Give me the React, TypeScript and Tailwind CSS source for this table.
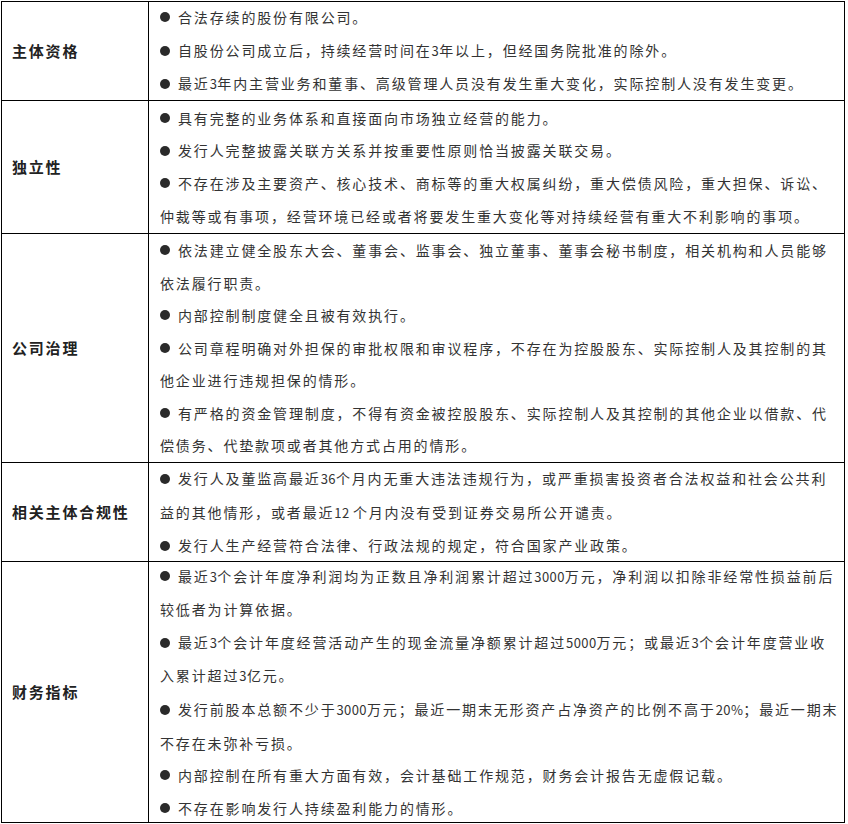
const rows = [
  {
    label: "主体资格",
    h: "h-[99px]",
    items: [
      ["合法存续的股份有限公司。"],
      ["自股份公司成立后，持续经营时间在3年以上，但经国务院批准的除外。"],
      ["最近3年内主营业务和董事、高级管理人员没有发生重大变化，实际控制人没有发生变更。"],
    ],
  },
  {
    label: "独立性",
    h: "h-[133px]",
    items: [
      ["具有完整的业务体系和直接面向市场独立经营的能力。"],
      ["发行人完整披露关联方关系并按重要性原则恰当披露关联交易。"],
      [
        "不存在涉及主要资产、核心技术、商标等的重大权属纠纷，重大偿债风险，重大担保、诉讼、",
        "仲裁等或有事项，经营环境已经或者将要发生重大变化等对持续经营有重大不利影响的事项。",
      ],
    ],
  },
  {
    label: "公司治理",
    h: "h-[229px]",
    items: [
      [
        "依法建立健全股东大会、董事会、监事会、独立董事、董事会秘书制度，相关机构和人员能够",
        "依法履行职责。",
      ],
      ["内部控制制度健全且被有效执行。"],
      [
        "公司章程明确对外担保的审批权限和审议程序，不存在为控股股东、实际控制人及其控制的其",
        "他企业进行违规担保的情形。",
      ],
      [
        "有严格的资金管理制度，不得有资金被控股股东、实际控制人及其控制的其他企业以借款、代",
        "偿债务、代垫款项或者其他方式占用的情形。",
      ],
    ],
  },
  {
    label: "相关主体合规性",
    h: "h-[99px]",
    items: [
      [
        "发行人及董监高最近36个月内无重大违法违规行为，或严重损害投资者合法权益和社会公共利",
        "益的其他情形，或者最近12 个月内没有受到证券交易所公开谴责。",
      ],
      ["发行人生产经营符合法律、行政法规的规定，符合国家产业政策。"],
    ],
  },
  {
    label: "财务指标",
    h: "h-[261px]",
    items: [
      [
        "最近3个会计年度净利润均为正数且净利润累计超过3000万元，净利润以扣除非经常性损益前后",
        "较低者为计算依据。",
      ],
      [
        "最近3个会计年度经营活动产生的现金流量净额累计超过5000万元；或最近3个会计年度营业收",
        "入累计超过3亿元。",
      ],
      [
        "发行前股本总额不少于3000万元；最近一期末无形资产占净资产的比例不高于20%；最近一期末",
        "不存在未弥补亏损。",
      ],
      ["内部控制在所有重大方面有效，会计基础工作规范，财务会计报告无虚假记载。"],
      ["不存在影响发行人持续盈利能力的情形。"],
    ],
  },
]

// digits in the original are narrow, keep them tight
function Line({ text }: { text: string }) {
  const parts = text.split(/([0-9%]+ ?)/)
  return (
    <span>
      {parts.map((p, i) =>
        /[0-9%]/.test(p) ? (
          <span key={i} className="text-[13px] tracking-[0.4px]">
            {p}
          </span>
        ) : (
          <span key={i}>{p}</span>
        )
      )}
    </span>
  )
}

export default function App() {
  return (
    <div className="min-h-[824px] bg-white pl-px pt-px font-['Noto_Sans_CJK_SC',sans-serif] text-[#333]">
      <div className="w-[844px] border-l border-t border-black">
        {rows.map((row) => (
          <div key={row.label} className={`flex border-b border-black ${row.h}`}>
            <div className="flex w-[147px] shrink-0 items-center border-r border-black pl-[10px] text-[15px] font-bold tracking-[1.8px] text-[#222]">
              {row.label}
            </div>
            <div className="flex flex-1 flex-col justify-center border-r border-black pl-[11px] text-[14px] leading-[32.6px] tracking-[1.85px]">
              {row.items.map((lines, i) => (
                <div key={i}>
                  {lines.map((line, j) => (
                    <div key={j} className="flex items-center whitespace-nowrap">
                      {j === 0 && (
                        <span className="mr-[8px] inline-block h-[10px] w-[10px] shrink-0 rounded-full bg-[#2a2a2a]" />
                      )}
                      <Line text={line} />
                    </div>
                  ))}
                </div>
              ))}
            </div>
          </div>
        ))}
      </div>
    </div>
  )
}
